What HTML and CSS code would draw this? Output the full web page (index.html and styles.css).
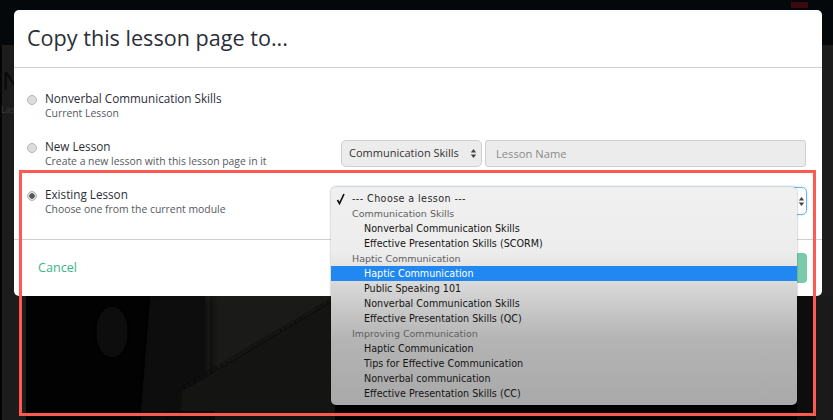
FILE: index.html
```html
<!DOCTYPE html>
<html lang="en">
<head>
<meta charset="utf-8">
<title>Copy this lesson page to...</title>
<link rel="stylesheet" href="styles.css">
</head>
<body>
<div class="backdrop">
  <div class="topbar"><span class="topbar-badge"></span></div>
  <div class="ghost-title">N</div>
  <div class="ghost-note">Las</div>
  <svg class="photo" viewBox="0 0 833 124" width="833" height="124" aria-hidden="true">
    <defs>
      <filter id="blur" x="-30%" y="-30%" width="160%" height="160%"><feGaussianBlur stdDeviation="5"/></filter>
      <filter id="soft" x="-30%" y="-30%" width="160%" height="160%"><feGaussianBlur stdDeviation="1.2"/></filter>
    </defs>
    <rect x="26" width="807" height="124" fill="#020202"/>
    <rect x="205" width="130" height="124" fill="#1a1a19"/>
    <path d="M150 0h60v124h-70z" fill="#0c0808" filter="url(#blur)"/>
    <ellipse cx="112" cy="36" rx="16" ry="26" fill="#100807" filter="url(#blur)"/>
    <path d="M182 95L335 2v122H180z" fill="#141413"/>
    <path d="M182 93L335 2" stroke="#0b0b0b" stroke-width="2" fill="none" filter="url(#soft)"/>
    <path d="M165 115h50v9h-50z" fill="#0a0a0a"/>
    <path d="M816 0h17v124h-17z" fill="#1a1a1a"/>
    <path d="M797 0h19v124h-19z" fill="#0d0d0d"/>
  </svg>
  <main class="modal">
    <h1 class="modal-title">Copy this lesson page to...</h1>
    <div class="modal-body">
      <div class="option">
        <span class="radio"></span>
        <div class="option-text">
          <div class="option-name">Nonverbal Communication Skills</div>
          <div class="option-note">Current Lesson</div>
        </div>
      </div>
      <div class="option">
        <span class="radio"></span>
        <div class="option-text">
          <div class="option-name">New Lesson</div>
          <div class="option-note">Create a new lesson with this lesson page in it</div>
        </div>
        <div class="controls">
          <div class="select-box">Communication Skills
            <svg class="updown" viewBox="0 0 7 11" width="7" height="11" aria-hidden="true"><path d="M3.5 1L6.2 4.400H.8zM3.5 10L.8 6.600h5.400z" fill="#444"/></svg>
          </div>
          <div class="text-box">Lesson Name</div>
        </div>
      </div>
      <div class="option">
        <span class="radio radio-on"></span>
        <div class="option-text">
          <div class="option-name">Existing Lesson</div>
          <div class="option-note">Choose one from the current module</div>
        </div>
        <div class="focus-select">
          <svg class="updown" viewBox="0 0 7 11" width="7" height="11" aria-hidden="true"><path d="M3.5 1L6.2 4.400H.8zM3.5 10L.8 6.600h5.400z" fill="#444"/></svg>
        </div>
      </div>
    </div>
    <footer class="modal-foot">
      <span class="cancel">Cancel</span>
      <span class="green-btn"></span>
    </footer>
  </main>
  <div class="menu">
    <div class="item item-first"><svg class="check" viewBox="0 0 10 12" width="10" height="12" aria-hidden="true"><path d="M1.500 7l2 3.500L8 1" stroke="#111" stroke-width="1.700" fill="none"/></svg>--- Choose a lesson ---</div>
    <div class="group">Communication Skills</div>
    <div class="item">Nonverbal Communication Skills</div>
    <div class="item">Effective Presentation Skills (SCORM)</div>
    <div class="group">Haptic Communication</div>
    <div class="item item-active">Haptic Communication</div>
    <div class="item">Public Speaking 101</div>
    <div class="item">Nonverbal Communication Skills</div>
    <div class="item">Effective Presentation Skills (QC)</div>
    <div class="group">Improving Communication</div>
    <div class="item">Haptic Communication</div>
    <div class="item">Tips for Effective Communication</div>
    <div class="item">Nonverbal communication</div>
    <div class="item">Effective Presentation Skills (CC)</div>
  </div>
  <div class="callout"></div>
</div>
</body>
</html>
```
FILE: styles.css
```css
* { box-sizing: border-box; }
html, body { margin: 0; padding: 0; }
body { width: 833px; height: 420px; overflow: hidden; background: #1c1c1c; font-family: "Open Sans", sans-serif; }
.backdrop { position: relative; width: 833px; height: 420px; padding: 10px 11px 0 14px; background: #1c1c1c; overflow: hidden; }
.backdrop::before { content: ""; position: absolute; left: 0; top: 0; width: 2px; height: 420px; background: #050505; }
.topbar { position: absolute; left: 0; top: 0; width: 833px; height: 45px; background: #05080a; }
.topbar-badge { position: absolute; left: 791px; top: 2px; width: 17px; height: 6px; background: #3a0a0e; }
.ghost-title { position: absolute; left: 2px; top: 64px; font-size: 26px; line-height: 32px; color: #090909; white-space: nowrap; }
.ghost-note { position: absolute; left: 1px; top: 103px; font-size: 9px; line-height: 14px; color: #3c3c3c; white-space: nowrap; }
.photo { position: absolute; left: 0; top: 296px; display: block; }

.modal { position: relative; width: 808px; height: 286px; background: #fff; border-radius: 5px; display: flex; flex-direction: column; }
.modal-title { margin: 0; height: 58px; padding: 10px 13px 0; font-size: 21.6px; line-height: 36px; font-weight: 400; color: #2b2e38; border-bottom: 1px solid #cfcfcf; }
.modal-body { height: 172px; border-bottom: 1px solid #cfcfcf; padding-top: 22px; }
.option { display: flex; height: 48px; padding-left: 13px; position: relative; }
.radio { width: 10px; height: 10px; margin: 5px 8px 0 0; flex: none; border-radius: 50%; background: #dcdcdc; border: 1px solid #b8b8b8; }
.radio-on { background: radial-gradient(circle, #555 0 2.4px, #dcdcdc 3px); }
.option-text { width: 299px; flex: none; margin-left: -3px; padding-left: 3px; }
.option-name { font-size: 11.7px; line-height: 16px; color: #2b2e38; }
.option-note { font-size: 10.4px; line-height: 13px; margin-top: 1px; color: #555a60; }
.controls { display: flex; gap: 3px; height: 27px; margin-top: 2px; }
.select-box { width: 141px; height: 27px; border: 1px solid #cfcfcf; border-radius: 5px; background: #ececec; font-size: 11px; line-height: 23px; padding-left: 7px; color: #333; position: relative; }
.updown { position: absolute; right: 4px; top: 7px; }
.text-box { width: 321px; height: 27px; border: 1px solid #cfcfcf; border-radius: 3px; background: #ececec; font-size: 11.200px; line-height: 26px; padding-left: 10px; color: #8a8a8a; }
.focus-select { position: relative; width: 475px; height: 28px; margin: 1px 0 0 -9px; border: 1px solid #6fb2ec; border-radius: 5px; box-shadow: 0 0 3px #bcdcf7; }
.focus-select .updown { right: 1px; top: 8px; }

.modal-foot { flex: 1; display: flex; align-items: center; justify-content: space-between; padding: 0 15px 0 24px; }
.cancel { font-size: 12.6px; color: #3cb58a; margin-top: -2px; }
.green-btn { width: 100px; height: 30px; background: #7acbaa; border-radius: 4px; }

.menu { position: absolute; left: 331px; top: 187px; width: 466px; height: 218px; padding-top: 4px; border-radius: 5px; background: linear-gradient(#f0f0f0 0, #ededed 30%, #dcdcdc 42%, #b4b4b4 70%, #a9a9a9 100%); box-shadow: 0 0 2px rgba(0,0,0,.45); font-family: "DejaVu Sans", sans-serif; font-size: 9.6px; line-height: 15px; color: #151515; }
.item, .group { height: 15px; white-space: nowrap; }
.item { padding-left: 33px; }
.group { padding-left: 21px; font-size: 9.5px; color: #5f5f5f; }
.item-first { padding-left: 21px; position: relative; letter-spacing: .4px; color: #2a2a2a; }
.check { position: absolute; left: 5px; top: 2px; }
.item-active { background: #2188f2; color: #fff; }

.callout { position: absolute; left: 19px; top: 170px; width: 797px; height: 246px; border: 3px solid #ff5a52; }
```
